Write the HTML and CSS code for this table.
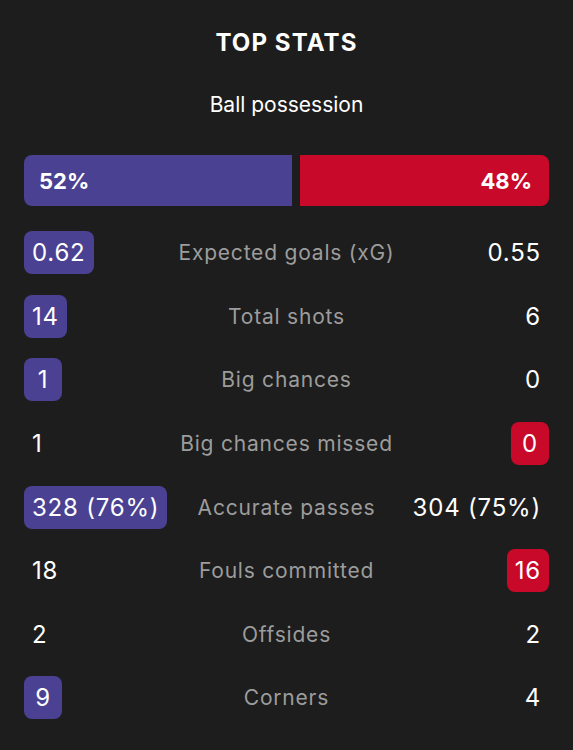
FILE: index.html
```html
<!DOCTYPE html>
<html lang="en">
<head>
    <meta charset="UTF-8">
    <meta name="viewport" content="width=device-width, initial-scale=1.0">
    <title>Top stats</title>
    <link rel="stylesheet" href="styles.css">
</head>
<body>
    <section class="stats">
        <h1 class="stats_title">TOP STATS</h1>
        <h2 class="stats_sub">Ball possession</h2>

        <!-- Possession bar -->
        <div class="possession">
            <div class="possession_home" style="flex: 52">52%</div>
            <div class="possession_away" style="flex: 48">48%</div>
        </div>

        <!-- Stat rows -->
        <div class="stat_row">
            <span class="val home_win">0.62</span>
            <span class="label">Expected goals (xG)</span>
            <span class="val">0.55</span>
        </div>
        <div class="stat_row">
            <span class="val home_win">14</span>
            <span class="label">Total shots</span>
            <span class="val">6</span>
        </div>
        <div class="stat_row">
            <span class="val home_win">1</span>
            <span class="label">Big chances</span>
            <span class="val">0</span>
        </div>
        <div class="stat_row">
            <span class="val">1</span>
            <span class="label">Big chances missed</span>
            <span class="val away_win">0</span>
        </div>
        <div class="stat_row">
            <span class="val home_win">328 (76%)</span>
            <span class="label">Accurate passes</span>
            <span class="val">304 (75%)</span>
        </div>
        <div class="stat_row">
            <span class="val">18</span>
            <span class="label">Fouls committed</span>
            <span class="val away_win">16</span>
        </div>
        <div class="stat_row">
            <span class="val">2</span>
            <span class="label">Offsides</span>
            <span class="val">2</span>
        </div>
        <div class="stat_row">
            <span class="val home_win">9</span>
            <span class="label">Corners</span>
            <span class="val">4</span>
        </div>
    </section>
</body>
</html>
```

FILE: styles.css
```css
body {
    font-family: Inter, "Noto Sans", sans-serif;
    background-color: #1d1d1d;
    color: #ffffff;
    margin: 0;
    padding: 0;
}

.stats {
    padding: 0 24px;
}

.stats_title {
    margin: 0;
    padding-top: 28px;
    height: 30px;
    line-height: 30px;
    font-size: 24px;
    font-weight: 700;
    letter-spacing: 1.1px;
    text-align: center;
}

.stats_sub {
    margin: 0;
    padding-top: 33px;
    height: 28px;
    line-height: 28px;
    font-size: 21px;
    font-weight: 400;
    text-align: center;
}

.possession {
    display: flex;
    gap: 8px;
    height: 51px;
    margin-top: 36px;
    margin-bottom: 15px;
    font-size: 22px;
    font-weight: 700;
}

.possession_home,
.possession_away {
    display: flex;
    align-items: center;
    padding: 0 17px 0 15px;
}

.possession_home {
    background-color: #4a4192;
    border-radius: 8px 0 0 8px;
}

.possession_away {
    background-color: #c8092a;
    border-radius: 0 8px 8px 0;
    justify-content: flex-end;
}

.stat_row {
    display: flex;
    justify-content: space-between;
    align-items: center;
    height: 63.6px;
    position: relative;
}

.val {
    display: flex;
    align-items: center;
    justify-content: center;
    box-sizing: border-box;
    height: 43px;
    padding: 0 8px;
    border-radius: 8px;
    font-size: 24px;
    letter-spacing: 0.8px;
}

.home_win {
    min-width: 38px;
    background-color: #4a4192;
}

.away_win {
    min-width: 38px;
    background-color: #c8092a;
}

.label {
    position: absolute;
    left: 0;
    right: 0;
    text-align: center;
    font-size: 21px;
    letter-spacing: 0.8px;
    color: #9c9c9c;
    pointer-events: none;
}
```
